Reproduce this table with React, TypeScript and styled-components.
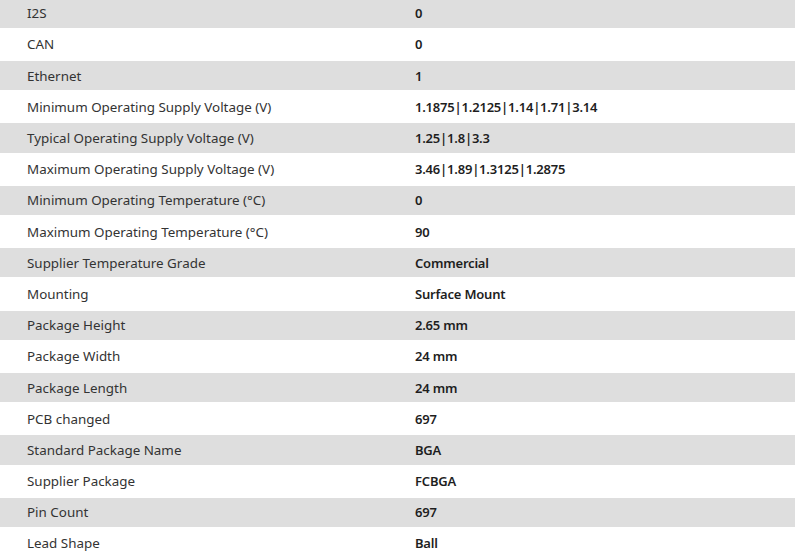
import styled, { createGlobalStyle } from "styled-components";

const GlobalStyle = createGlobalStyle`
  html, body {
    margin: 0;
    padding: 0;
    background: #ffffff;
    overflow: hidden;
  }
`;

const SPECS: [string, string][] = [
  ["I2S", "0"],
  ["CAN", "0"],
  ["Ethernet", "1"],
  ["Minimum Operating Supply Voltage (V)", "1.1875|1.2125|1.14|1.71|3.14"],
  ["Typical Operating Supply Voltage (V)", "1.25|1.8|3.3"],
  ["Maximum Operating Supply Voltage (V)", "3.46|1.89|1.3125|1.2875"],
  ["Minimum Operating Temperature (°C)", "0"],
  ["Maximum Operating Temperature (°C)", "90"],
  ["Supplier Temperature Grade", "Commercial"],
  ["Mounting", "Surface Mount"],
  ["Package Height", "2.65 mm"],
  ["Package Width", "24 mm"],
  ["Package Length", "24 mm"],
  ["PCB changed", "697"],
  ["Standard Package Name", "BGA"],
  ["Supplier Package", "FCBGA"],
  ["Pin Count", "697"],
  ["Lead Shape", "Ball"],
];

const App = () => {
  return (
    <>
      <GlobalStyle />
      <SpecTable>
        {SPECS.map(([label, value], index) => (
          <SpecRow key={label} $shaded={index % 2 === 0}>
            <SpecLabel>{label}</SpecLabel>
            <SpecValue>{value}</SpecValue>
          </SpecRow>
        ))}
      </SpecTable>
    </>
  );
};

const SpecTable = styled.div`
  display: flex;
  flex-direction: column;
  gap: 2px;
  width: 795px;
  margin-top: -1.3px;
  font-family: "Noto Sans", "Open Sans", Arial, sans-serif;
`;

const SpecRow = styled.div<{ $shaded: boolean }>`
  display: grid;
  grid-template-columns: 415px 1fr;
  align-items: center;
  height: 29.2px;
  flex-shrink: 0;
  background-color: ${({ $shaded }) => ($shaded ? "#dedede" : "#ffffff")};
`;

const SpecLabel = styled.div`
  padding-left: 27px;
  font-size: 13.4px;
  color: #333333;
  white-space: nowrap;
`;

const SpecValue = styled.div`
  font-size: 13px;
  font-weight: 600;
  letter-spacing: -0.2px;
  color: #1e1e1e;
  white-space: nowrap;
`;

export default App;
